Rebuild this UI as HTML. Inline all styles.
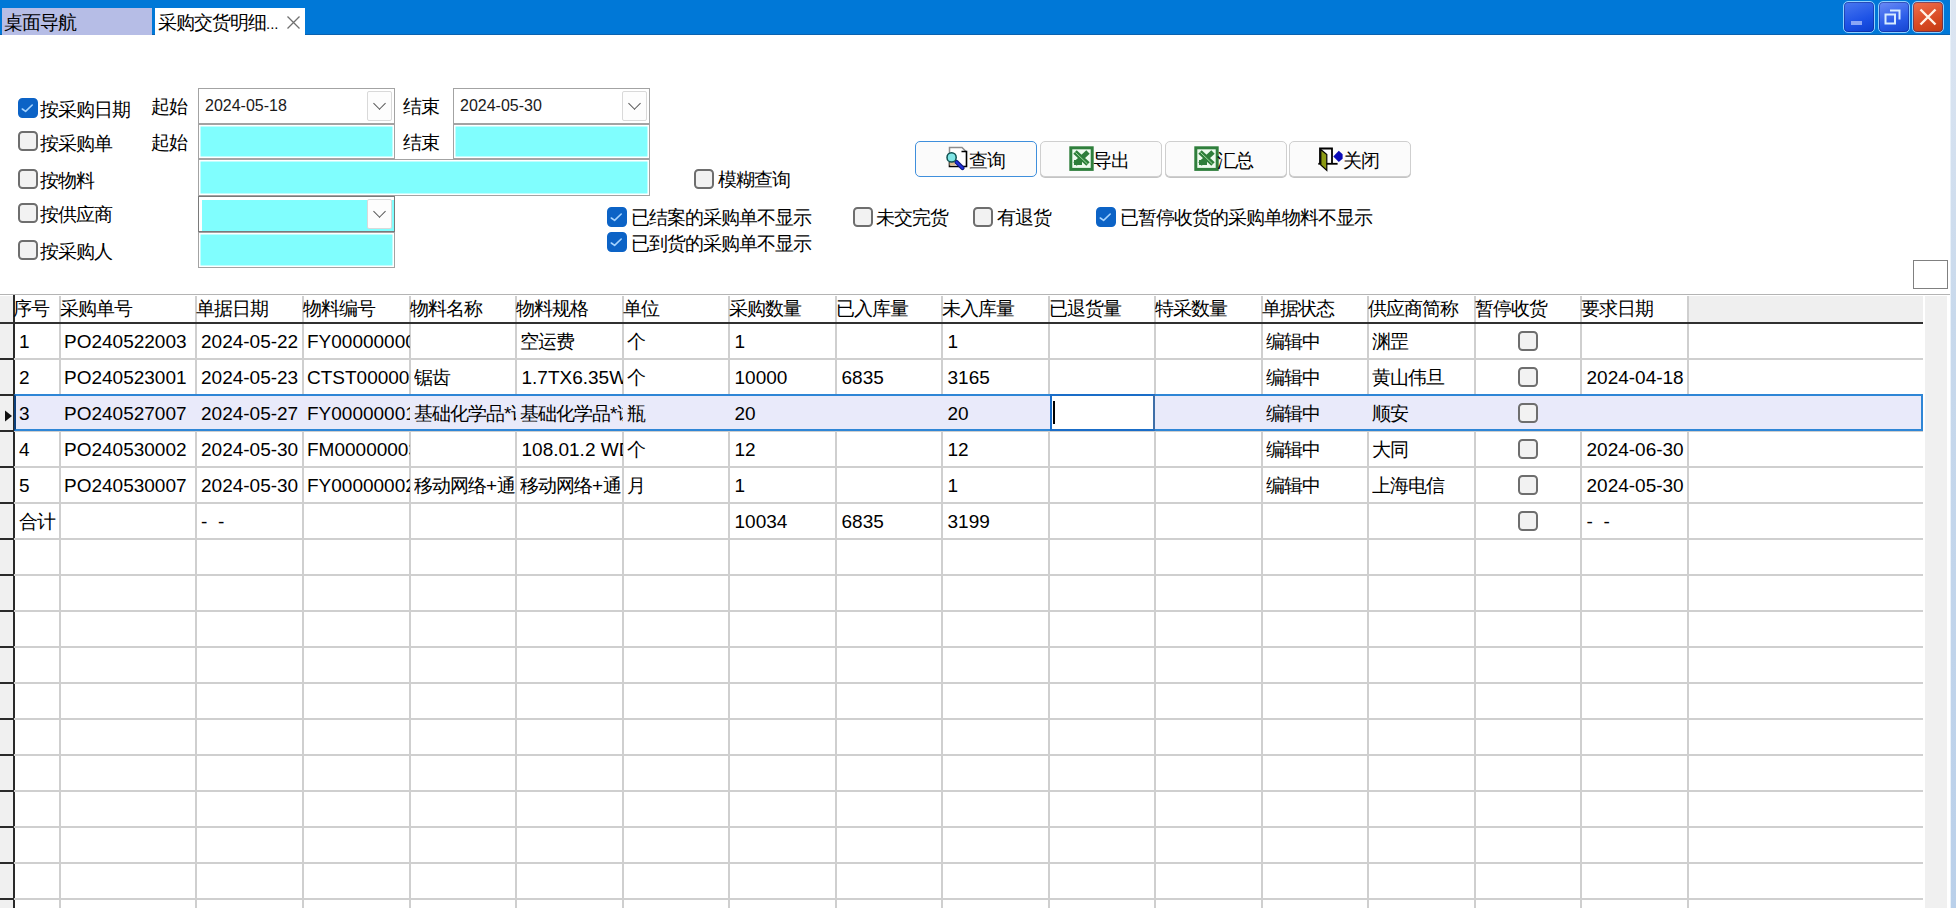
<!DOCTYPE html><html><head><meta charset="utf-8"><style>
*{margin:0;padding:0;box-sizing:border-box}
html,body{width:1956px;height:908px;overflow:hidden;background:#fff;font-family:"Liberation Sans",sans-serif;color:#000}
.ab{position:absolute}
.t{position:absolute;white-space:nowrap;font-size:19px;line-height:22px}
.c{letter-spacing:-1px}
.cb{position:absolute;width:20px;height:20px;border:2px solid #6e6e6e;border-radius:4.5px;background:#f2f2f2}
.cb.on{background:#0c63c6;border-color:#0c63c6}

.inp{position:absolute;border:1px solid #a3a3a3;background:#fff}
.cy{background:#80fefe;box-shadow:inset 0 0 0 1.5px #fff}
.dd{position:absolute;width:25px;border:1px solid #d9d9d9;border-radius:2px;background:#fdfdfd}
.dd:after{content:"";position:absolute;left:7px;top:7px;width:8px;height:8px;border-right:1.5px solid #555;border-bottom:1.5px solid #555;transform:rotate(45deg)}
.btn{position:absolute;height:36px;border:1px solid #cfcfcf;border-radius:5px;background:#fbfbfb;box-shadow:0 1px 0 #c4c4c4}
.vl{position:absolute;width:2px;background:#cfcfcf}
.hl{position:absolute;height:2px;background:#cfcfcf}
</style></head><body>
<div class="ab" style="left:0;top:0;width:1950px;height:35px;background:#0078d7;border-bottom:1px solid #0a62b0"></div>
<div class="ab" style="left:1950px;top:0;width:6px;height:908px;background:linear-gradient(to bottom,#dde6f2,#c8d9ec 35%,#bad0ea);border-left:1px solid #e8f0f8"></div>
<div class="ab" style="left:2px;top:8px;width:150px;height:27px;background:#b6bde6"></div>
<div class="t" style="left:4px;top:12px;letter-spacing:-1px">桌面导航</div>
<div class="ab" style="left:155px;top:8px;width:150px;height:27px;background:#fff"></div>
<div class="t" style="left:158px;top:12px;letter-spacing:-1px">采购交货明细<span style="font-size:15px;letter-spacing:0">...</span></div>
<svg class="ab" style="left:286px;top:15px" width="15" height="15"><path d="M1.5 1.5L13.5 13.5M13.5 1.5L1.5 13.5" stroke="#707070" stroke-width="1.3"/></svg>
<div class="ab" style="left:1843px;top:1px;width:32px;height:32px;border:1.5px solid #8fd0ff;border-radius:5px;background:linear-gradient(160deg,#4a78f0,#1d52e6 60%,#0b3fd0);overflow:hidden;box-shadow:inset 0 0 0 1px rgba(10,30,120,0.45)"><div class="ab" style="left:7px;top:19px;width:11px;height:4px;background:#8aa6f6"></div></div>
<div class="ab" style="left:1878px;top:1px;width:32px;height:32px;border:1.5px solid #8fd0ff;border-radius:5px;background:linear-gradient(160deg,#6c8cf6,#2a5ce8 60%,#1444d0);overflow:hidden;box-shadow:inset 0 0 0 1px rgba(10,30,120,0.45)"><svg class="ab" style="left:0;top:0" width="30" height="30"><path d="M6.5 12.5h9.5v9h-9.5z" fill="none" stroke="#d6ecff" stroke-width="2"/><path d="M11 8.5h9.5v9" fill="none" stroke="#d6ecff" stroke-width="2"/></svg></div>
<div class="ab" style="left:1912px;top:1px;width:32px;height:32px;border:1.5px solid #8fd0ff;border-radius:5px;background:linear-gradient(160deg,#f07050,#d84a22 60%,#c23a12);overflow:hidden;box-shadow:inset 0 0 0 1px rgba(10,30,120,0.45)"><svg class="ab" style="left:0;top:0" width="30" height="30"><path d="M7.5 7.5L22.5 22.5M22.5 7.5L7.5 22.5" stroke="#fff4e8" stroke-width="2.4"/></svg></div>
<div class="cb on" style="left:18px;top:98px"><svg style="position:absolute;left:-2px;top:-2px" width="20" height="20"><path d="M4.3 11L7.6 13.4L14.2 7" fill="none" stroke="#a6d4ff" stroke-width="1.6" stroke-linecap="round" stroke-linejoin="round"/></svg></div>
<div class="t" style="left:40px;top:99px;"><span class="c">按采购日期</span></div>
<div class="cb" style="left:18px;top:131px"></div>
<div class="t" style="left:40px;top:133px;"><span class="c">按采购单</span></div>
<div class="cb" style="left:18px;top:169px"></div>
<div class="t" style="left:40px;top:170px;"><span class="c">按物料</span></div>
<div class="cb" style="left:18px;top:203px"></div>
<div class="t" style="left:40px;top:204px;"><span class="c">按供应商</span></div>
<div class="cb" style="left:18px;top:240px"></div>
<div class="t" style="left:40px;top:241px;"><span class="c">按采购人</span></div>
<div class="t" style="left:151px;top:96px;"><span class="c">起始</span></div>
<div class="t" style="left:151px;top:132px;"><span class="c">起始</span></div>
<div class="t" style="left:403px;top:96px;"><span class="c">结束</span></div>
<div class="t" style="left:403px;top:132px;"><span class="c">结束</span></div>
<div class="inp" style="left:198px;top:88px;width:197px;height:36px"></div>
<div class="dd" style="left:367px;top:91px;height:30px"></div>
<div class="t" style="left:205px;top:95px;font-size:16px;color:#1a1a1a">2024-05-18</div>
<div class="inp" style="left:453px;top:88px;width:197px;height:36px"></div>
<div class="dd" style="left:622px;top:91px;height:30px"></div>
<div class="t" style="left:460px;top:95px;font-size:16px;color:#1a1a1a">2024-05-30</div>
<div class="inp cy" style="left:198px;top:124px;width:197px;height:35px"></div>
<div class="inp cy" style="left:453px;top:124px;width:197px;height:35px"></div>
<div class="inp cy" style="left:198px;top:159px;width:452px;height:37px"></div>
<div class="inp cy" style="border-color:#7a7a7a;box-shadow:inset 3px 3px 0 #fff;left:198px;top:196px;width:197px;height:36px"></div>
<div class="dd" style="left:367px;top:199px;height:30px"></div>
<div class="inp cy" style="left:198px;top:232px;width:197px;height:36px"></div>
<div class="cb" style="left:694px;top:169px"></div>
<div class="t" style="left:718px;top:169px;"><span class="c">模糊查询</span></div>
<div class="cb on" style="left:607px;top:207px"><svg style="position:absolute;left:-2px;top:-2px" width="20" height="20"><path d="M4.3 11L7.6 13.4L14.2 7" fill="none" stroke="#a6d4ff" stroke-width="1.6" stroke-linecap="round" stroke-linejoin="round"/></svg></div>
<div class="t" style="left:631px;top:207px;"><span class="c">已结案的采购单不显示</span></div>
<div class="cb on" style="left:607px;top:232px"><svg style="position:absolute;left:-2px;top:-2px" width="20" height="20"><path d="M4.3 11L7.6 13.4L14.2 7" fill="none" stroke="#a6d4ff" stroke-width="1.6" stroke-linecap="round" stroke-linejoin="round"/></svg></div>
<div class="t" style="left:631px;top:233px;"><span class="c">已到货的采购单不显示</span></div>
<div class="cb" style="left:853px;top:207px"></div>
<div class="t" style="left:876px;top:207px;"><span class="c">未交完货</span></div>
<div class="cb" style="left:973px;top:207px"></div>
<div class="t" style="left:997px;top:207px;"><span class="c">有退货</span></div>
<div class="cb on" style="left:1096px;top:207px"><svg style="position:absolute;left:-2px;top:-2px" width="20" height="20"><path d="M4.3 11L7.6 13.4L14.2 7" fill="none" stroke="#a6d4ff" stroke-width="1.6" stroke-linecap="round" stroke-linejoin="round"/></svg></div>
<div class="t" style="left:1120px;top:207px;"><span class="c">已暂停收货的采购单物料不显示</span></div>
<div class="btn" style="left:915px;top:141px;width:122px;border:1.5px solid #3f8fdc;box-shadow:none;"></div>
<div class="btn" style="left:1040px;top:141px;width:122px;"></div>
<div class="btn" style="left:1165px;top:141px;width:122px;"></div>
<div class="btn" style="left:1289px;top:141px;width:122px;"></div>
<svg class="ab" style="left:942px;top:143px" width="30" height="30"><path d="M7.5 4.5H20L24.5 9V23.5H7.5Z" fill="#fff"/><path d="M7.5 12V4.5H20L24.5 9" fill="none" stroke="#8c8c8c" stroke-width="1.5"/><path d="M19.5 8.5H24.5V23.5H7.5V19" fill="none" stroke="#000" stroke-width="1.6"/><rect x="7.5" y="19" width="6" height="3.5" fill="#dcbc90"/><line x1="14.5" y1="19" x2="20.5" y2="25" stroke="#08127a" stroke-width="4.2" stroke-linecap="round"/><line x1="14.5" y1="19" x2="20.5" y2="25" stroke="#2030d8" stroke-width="2.2" stroke-linecap="round"/><circle cx="9.6" cy="14.4" r="4.6" fill="#80e6e6" stroke="#0b4f4f" stroke-width="1.5"/></svg>
<div class="t" style="left:969px;top:150px;"><span class="c">查询</span></div>
<svg class="ab" style="left:1066px;top:143px" width="30" height="30"><rect x="4.8" y="4.8" width="21.4" height="21.6" fill="#eefaee" stroke="#2f7f3c" stroke-width="3"/><path d="M9 9L22 21M22 9L9 21" stroke="#2e7d3a" stroke-width="5"/><rect x="8" y="17" width="8" height="5" fill="#2e7d3a"/><path d="M9.5 9.5L21.5 21" stroke="#9fe09f" stroke-width="1"/></svg>
<div class="t" style="left:1093px;top:150px;"><span class="c">导出</span></div>
<svg class="ab" style="left:1191px;top:143px" width="30" height="30"><rect x="4.8" y="4.8" width="21.4" height="21.6" fill="#eefaee" stroke="#2f7f3c" stroke-width="3"/><path d="M9 9L22 21M22 9L9 21" stroke="#2e7d3a" stroke-width="5"/><rect x="8" y="17" width="8" height="5" fill="#2e7d3a"/><path d="M9.5 9.5L21.5 21" stroke="#9fe09f" stroke-width="1"/></svg>
<div class="t" style="left:1217px;top:150px;"><span class="c">汇总</span></div>
<svg class="ab" style="left:1314px;top:143px" width="30" height="30"><path d="M6 20.5V5.5H18V20.8" fill="none" stroke="#000" stroke-width="1.8"/><path d="M4.3 20.8H23.6" stroke="#000" stroke-width="1.8"/><path d="M6.8 6.5L12.8 11.5V27.5L6.8 22Z" fill="#8c9a14" stroke="#000" stroke-width="1.2"/><path d="M19.3 13.4L24.8 7.8L28.6 11.2V15.8L24.8 19Z" fill="#0a0ab8"/></svg>
<div class="t" style="left:1343px;top:150px;"><span class="c">关闭</span></div>
<div class="ab" style="left:1913px;top:260px;width:35px;height:29px;border:1px solid #808080;background:#fff"></div>
<div class="ab" style="left:0;top:293.5px;width:1950px;height:1.5px;background:#b4b4b4"></div>
<div class="ab" style="left:1688px;top:296px;width:235px;height:27px;background:#efefef"></div>
<div class="ab" style="left:1925px;top:296px;width:22px;height:612px;background:#f0f0f0"></div>
<div class="ab" style="left:0;top:296px;width:13px;height:612px;background:#f0f0f0"></div>
<div class="ab" style="left:13px;top:295px;width:2px;height:613px;background:#2a2a2a"></div>
<div class="vl" style="left:59px;top:296px;height:612px"></div>
<div class="vl" style="left:195px;top:296px;height:612px"></div>
<div class="vl" style="left:302px;top:296px;height:612px"></div>
<div class="vl" style="left:409px;top:296px;height:612px"></div>
<div class="vl" style="left:515px;top:296px;height:612px"></div>
<div class="vl" style="left:622px;top:296px;height:612px"></div>
<div class="vl" style="left:728px;top:296px;height:612px"></div>
<div class="vl" style="left:835px;top:296px;height:612px"></div>
<div class="vl" style="left:941px;top:296px;height:612px"></div>
<div class="vl" style="left:1048px;top:296px;height:612px"></div>
<div class="vl" style="left:1154px;top:296px;height:612px"></div>
<div class="vl" style="left:1261px;top:296px;height:612px"></div>
<div class="vl" style="left:1367px;top:296px;height:612px"></div>
<div class="vl" style="left:1474px;top:296px;height:612px"></div>
<div class="vl" style="left:1580px;top:296px;height:612px"></div>
<div class="vl" style="left:1687px;top:296px;height:612px"></div>
<div class="hl" style="left:14px;top:358px;width:1909px"></div>
<div class="ab" style="left:0;top:358px;width:13px;height:2px;background:#2a2a2a"></div>
<div class="hl" style="left:14px;top:394px;width:1909px"></div>
<div class="ab" style="left:0;top:394px;width:13px;height:2px;background:#2a2a2a"></div>
<div class="hl" style="left:14px;top:430px;width:1909px"></div>
<div class="ab" style="left:0;top:430px;width:13px;height:2px;background:#2a2a2a"></div>
<div class="hl" style="left:14px;top:466px;width:1909px"></div>
<div class="ab" style="left:0;top:466px;width:13px;height:2px;background:#2a2a2a"></div>
<div class="hl" style="left:14px;top:502px;width:1909px"></div>
<div class="ab" style="left:0;top:502px;width:13px;height:2px;background:#2a2a2a"></div>
<div class="hl" style="left:14px;top:538px;width:1909px"></div>
<div class="ab" style="left:0;top:538px;width:13px;height:2px;background:#2a2a2a"></div>
<div class="hl" style="left:14px;top:574px;width:1909px"></div>
<div class="ab" style="left:0;top:574px;width:13px;height:2px;background:#2a2a2a"></div>
<div class="hl" style="left:14px;top:610px;width:1909px"></div>
<div class="ab" style="left:0;top:610px;width:13px;height:2px;background:#2a2a2a"></div>
<div class="hl" style="left:14px;top:646px;width:1909px"></div>
<div class="ab" style="left:0;top:646px;width:13px;height:2px;background:#2a2a2a"></div>
<div class="hl" style="left:14px;top:682px;width:1909px"></div>
<div class="ab" style="left:0;top:682px;width:13px;height:2px;background:#2a2a2a"></div>
<div class="hl" style="left:14px;top:718px;width:1909px"></div>
<div class="ab" style="left:0;top:718px;width:13px;height:2px;background:#2a2a2a"></div>
<div class="hl" style="left:14px;top:754px;width:1909px"></div>
<div class="ab" style="left:0;top:754px;width:13px;height:2px;background:#2a2a2a"></div>
<div class="hl" style="left:14px;top:790px;width:1909px"></div>
<div class="ab" style="left:0;top:790px;width:13px;height:2px;background:#2a2a2a"></div>
<div class="hl" style="left:14px;top:826px;width:1909px"></div>
<div class="ab" style="left:0;top:826px;width:13px;height:2px;background:#2a2a2a"></div>
<div class="hl" style="left:14px;top:862px;width:1909px"></div>
<div class="ab" style="left:0;top:862px;width:13px;height:2px;background:#2a2a2a"></div>
<div class="hl" style="left:14px;top:898px;width:1909px"></div>
<div class="ab" style="left:0;top:898px;width:13px;height:2px;background:#2a2a2a"></div>
<div class="ab" style="left:0;top:322px;width:1923px;height:2px;background:#303030"></div>
<div class="t" style="left:13px;top:298px;"><span class="c">序号</span></div>
<div class="t" style="left:60px;top:298px;"><span class="c">采购单号</span></div>
<div class="t" style="left:196px;top:298px;"><span class="c">单据日期</span></div>
<div class="t" style="left:303px;top:298px;"><span class="c">物料编号</span></div>
<div class="t" style="left:410px;top:298px;"><span class="c">物料名称</span></div>
<div class="t" style="left:516px;top:298px;"><span class="c">物料规格</span></div>
<div class="t" style="left:623px;top:298px;"><span class="c">单位</span></div>
<div class="t" style="left:729px;top:298px;"><span class="c">采购数量</span></div>
<div class="t" style="left:836px;top:298px;"><span class="c">已入库量</span></div>
<div class="t" style="left:942px;top:298px;"><span class="c">未入库量</span></div>
<div class="t" style="left:1049px;top:298px;"><span class="c">已退货量</span></div>
<div class="t" style="left:1155px;top:298px;"><span class="c">特采数量</span></div>
<div class="t" style="left:1262px;top:298px;"><span class="c">单据状态</span></div>
<div class="t" style="left:1368px;top:298px;"><span class="c">供应商简称</span></div>
<div class="t" style="left:1475px;top:298px;"><span class="c">暂停收货</span></div>
<div class="t" style="left:1581px;top:298px;"><span class="c">要求日期</span></div>
<div class="ab" style="left:14px;top:394px;width:1909px;height:37px;background:#e9eafa;border:2px solid #2f86d6;border-left-color:#0d3f7a"></div>
<svg class="ab" style="left:5px;top:410px" width="8" height="12"><path d="M0 0.5L7 6L0 11.5z" fill="#111"/></svg>
<div class="ab" style="left:1050px;top:394px;width:105px;height:37px;background:#fff;border:2.5px solid #1a6dc8;border-right-color:#3f6fa8"></div>
<div class="ab" style="left:1052.5px;top:401px;width:2px;height:23px;background:#000"></div>
<div class="ab" style="left:17px;top:331px;width:43px;height:24px;overflow:hidden"><div class="t" style="left:2px;top:0">1</div></div>
<div class="ab" style="left:64px;top:331px;width:132px;height:24px;overflow:hidden"><div class="t" style="left:0px;top:0">PO240522003</div></div>
<div class="ab" style="left:200px;top:331px;width:103px;height:24px;overflow:hidden"><div class="t" style="left:1px;top:0">2024-05-22</div></div>
<div class="ab" style="left:307px;top:331px;width:103px;height:24px;overflow:hidden"><div class="t" style="left:0px;top:0">FY00000000</div></div>
<div class="ab" style="left:520px;top:331px;width:103px;height:24px;overflow:hidden"><div class="t" style="left:0px;top:0"><span class="c">空运费</span></div></div>
<div class="ab" style="left:627px;top:331px;width:102px;height:24px;overflow:hidden"><div class="t" style="left:0px;top:0"><span class="c">个</span></div></div>
<div class="ab" style="left:733px;top:331px;width:103px;height:24px;overflow:hidden"><div class="t" style="left:1.5px;top:0">1</div></div>
<div class="ab" style="left:946px;top:331px;width:103px;height:24px;overflow:hidden"><div class="t" style="left:1.5px;top:0">1</div></div>
<div class="ab" style="left:1266px;top:331px;width:102px;height:24px;overflow:hidden"><div class="t" style="left:0px;top:0"><span class="c">编辑中</span></div></div>
<div class="ab" style="left:1372px;top:331px;width:103px;height:24px;overflow:hidden"><div class="t" style="left:0px;top:0"><span class="c">渊罡</span></div></div>
<div class="cb" style="left:1518px;top:331px"></div>
<div class="ab" style="left:17px;top:367px;width:43px;height:24px;overflow:hidden"><div class="t" style="left:2px;top:0">2</div></div>
<div class="ab" style="left:64px;top:367px;width:132px;height:24px;overflow:hidden"><div class="t" style="left:0px;top:0">PO240523001</div></div>
<div class="ab" style="left:200px;top:367px;width:103px;height:24px;overflow:hidden"><div class="t" style="left:1px;top:0">2024-05-23</div></div>
<div class="ab" style="left:307px;top:367px;width:103px;height:24px;overflow:hidden"><div class="t" style="left:0px;top:0">CTST000000</div></div>
<div class="ab" style="left:414px;top:367px;width:102px;height:24px;overflow:hidden"><div class="t" style="left:0px;top:0"><span class="c">锯齿</span></div></div>
<div class="ab" style="left:520px;top:367px;width:103px;height:24px;overflow:hidden"><div class="t" style="left:1.5px;top:0">1.7TX6.35W.</div></div>
<div class="ab" style="left:627px;top:367px;width:102px;height:24px;overflow:hidden"><div class="t" style="left:0px;top:0"><span class="c">个</span></div></div>
<div class="ab" style="left:733px;top:367px;width:103px;height:24px;overflow:hidden"><div class="t" style="left:1.5px;top:0">10000</div></div>
<div class="ab" style="left:840px;top:367px;width:102px;height:24px;overflow:hidden"><div class="t" style="left:1.5px;top:0">6835</div></div>
<div class="ab" style="left:946px;top:367px;width:103px;height:24px;overflow:hidden"><div class="t" style="left:1.5px;top:0">3165</div></div>
<div class="ab" style="left:1266px;top:367px;width:102px;height:24px;overflow:hidden"><div class="t" style="left:0px;top:0"><span class="c">编辑中</span></div></div>
<div class="ab" style="left:1372px;top:367px;width:103px;height:24px;overflow:hidden"><div class="t" style="left:0px;top:0"><span class="c">黄山伟旦</span></div></div>
<div class="cb" style="left:1518px;top:367px"></div>
<div class="ab" style="left:1585px;top:367px;width:103px;height:24px;overflow:hidden"><div class="t" style="left:1.5px;top:0">2024-04-18</div></div>
<div class="ab" style="left:17px;top:403px;width:43px;height:24px;overflow:hidden"><div class="t" style="left:2px;top:0">3</div></div>
<div class="ab" style="left:64px;top:403px;width:132px;height:24px;overflow:hidden"><div class="t" style="left:0px;top:0">PO240527007</div></div>
<div class="ab" style="left:200px;top:403px;width:103px;height:24px;overflow:hidden"><div class="t" style="left:1px;top:0">2024-05-27</div></div>
<div class="ab" style="left:307px;top:403px;width:103px;height:24px;overflow:hidden"><div class="t" style="left:0px;top:0">FY00000001</div></div>
<div class="ab" style="left:414px;top:403px;width:102px;height:24px;overflow:hidden"><div class="t" style="left:0px;top:0"><span class="c">基础化学品</span>*<span class="c">试</span></div></div>
<div class="ab" style="left:520px;top:403px;width:103px;height:24px;overflow:hidden"><div class="t" style="left:0px;top:0"><span class="c">基础化学品</span>*<span class="c">试</span></div></div>
<div class="ab" style="left:627px;top:403px;width:102px;height:24px;overflow:hidden"><div class="t" style="left:0px;top:0"><span class="c">瓶</span></div></div>
<div class="ab" style="left:733px;top:403px;width:103px;height:24px;overflow:hidden"><div class="t" style="left:1.5px;top:0">20</div></div>
<div class="ab" style="left:946px;top:403px;width:103px;height:24px;overflow:hidden"><div class="t" style="left:1.5px;top:0">20</div></div>
<div class="ab" style="left:1266px;top:403px;width:102px;height:24px;overflow:hidden"><div class="t" style="left:0px;top:0"><span class="c">编辑中</span></div></div>
<div class="ab" style="left:1372px;top:403px;width:103px;height:24px;overflow:hidden"><div class="t" style="left:0px;top:0"><span class="c">顺安</span></div></div>
<div class="cb" style="left:1518px;top:403px"></div>
<div class="ab" style="left:17px;top:439px;width:43px;height:24px;overflow:hidden"><div class="t" style="left:2px;top:0">4</div></div>
<div class="ab" style="left:64px;top:439px;width:132px;height:24px;overflow:hidden"><div class="t" style="left:0px;top:0">PO240530002</div></div>
<div class="ab" style="left:200px;top:439px;width:103px;height:24px;overflow:hidden"><div class="t" style="left:1px;top:0">2024-05-30</div></div>
<div class="ab" style="left:307px;top:439px;width:103px;height:24px;overflow:hidden"><div class="t" style="left:0px;top:0">FM00000003</div></div>
<div class="ab" style="left:520px;top:439px;width:103px;height:24px;overflow:hidden"><div class="t" style="left:1.5px;top:0">108.01.2 WD</div></div>
<div class="ab" style="left:627px;top:439px;width:102px;height:24px;overflow:hidden"><div class="t" style="left:0px;top:0"><span class="c">个</span></div></div>
<div class="ab" style="left:733px;top:439px;width:103px;height:24px;overflow:hidden"><div class="t" style="left:1.5px;top:0">12</div></div>
<div class="ab" style="left:946px;top:439px;width:103px;height:24px;overflow:hidden"><div class="t" style="left:1.5px;top:0">12</div></div>
<div class="ab" style="left:1266px;top:439px;width:102px;height:24px;overflow:hidden"><div class="t" style="left:0px;top:0"><span class="c">编辑中</span></div></div>
<div class="ab" style="left:1372px;top:439px;width:103px;height:24px;overflow:hidden"><div class="t" style="left:0px;top:0"><span class="c">大同</span></div></div>
<div class="cb" style="left:1518px;top:439px"></div>
<div class="ab" style="left:1585px;top:439px;width:103px;height:24px;overflow:hidden"><div class="t" style="left:1.5px;top:0">2024-06-30</div></div>
<div class="ab" style="left:17px;top:475px;width:43px;height:24px;overflow:hidden"><div class="t" style="left:2px;top:0">5</div></div>
<div class="ab" style="left:64px;top:475px;width:132px;height:24px;overflow:hidden"><div class="t" style="left:0px;top:0">PO240530007</div></div>
<div class="ab" style="left:200px;top:475px;width:103px;height:24px;overflow:hidden"><div class="t" style="left:1px;top:0">2024-05-30</div></div>
<div class="ab" style="left:307px;top:475px;width:103px;height:24px;overflow:hidden"><div class="t" style="left:0px;top:0">FY00000002</div></div>
<div class="ab" style="left:414px;top:475px;width:102px;height:24px;overflow:hidden"><div class="t" style="left:0px;top:0"><span class="c">移动网络</span>+<span class="c">通</span></div></div>
<div class="ab" style="left:520px;top:475px;width:103px;height:24px;overflow:hidden"><div class="t" style="left:0px;top:0"><span class="c">移动网络</span>+<span class="c">通</span></div></div>
<div class="ab" style="left:627px;top:475px;width:102px;height:24px;overflow:hidden"><div class="t" style="left:0px;top:0"><span class="c">月</span></div></div>
<div class="ab" style="left:733px;top:475px;width:103px;height:24px;overflow:hidden"><div class="t" style="left:1.5px;top:0">1</div></div>
<div class="ab" style="left:946px;top:475px;width:103px;height:24px;overflow:hidden"><div class="t" style="left:1.5px;top:0">1</div></div>
<div class="ab" style="left:1266px;top:475px;width:102px;height:24px;overflow:hidden"><div class="t" style="left:0px;top:0"><span class="c">编辑中</span></div></div>
<div class="ab" style="left:1372px;top:475px;width:103px;height:24px;overflow:hidden"><div class="t" style="left:0px;top:0"><span class="c">上海电信</span></div></div>
<div class="cb" style="left:1518px;top:475px"></div>
<div class="ab" style="left:1585px;top:475px;width:103px;height:24px;overflow:hidden"><div class="t" style="left:1.5px;top:0">2024-05-30</div></div>
<div class="ab" style="left:17px;top:511px;width:43px;height:24px;overflow:hidden"><div class="t" style="left:2px;top:0"><span class="c">合计</span></div></div>
<div class="ab" style="left:200px;top:511px;width:103px;height:24px;overflow:hidden"><div class="t" style="left:1px;top:0">-&nbsp;&nbsp;-</div></div>
<div class="ab" style="left:733px;top:511px;width:103px;height:24px;overflow:hidden"><div class="t" style="left:1.5px;top:0">10034</div></div>
<div class="ab" style="left:840px;top:511px;width:102px;height:24px;overflow:hidden"><div class="t" style="left:1.5px;top:0">6835</div></div>
<div class="ab" style="left:946px;top:511px;width:103px;height:24px;overflow:hidden"><div class="t" style="left:1.5px;top:0">3199</div></div>
<div class="cb" style="left:1518px;top:511px"></div>
<div class="ab" style="left:1585px;top:511px;width:103px;height:24px;overflow:hidden"><div class="t" style="left:1.5px;top:0">-&nbsp;&nbsp;-</div></div>
</body></html>
